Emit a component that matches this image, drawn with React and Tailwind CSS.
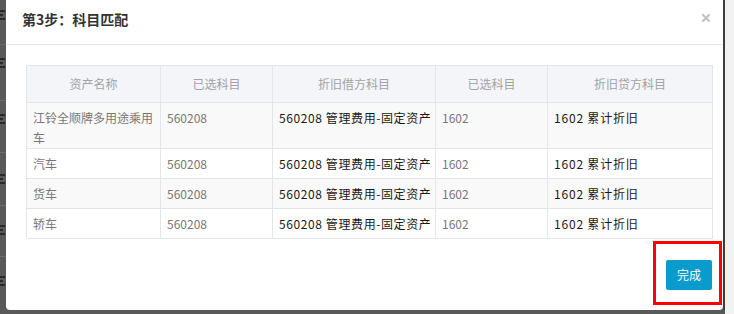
const rows = [
  { name: ['江铃全顺牌多用途乘用', '车'], tall: true },
  { name: ['汽车'] },
  { name: ['货车'] },
  { name: ['轿车'] },
]

const font = { fontFamily: '"Noto Sans CJK SC", "Liberation Sans", sans-serif' }

// page behind the dimmed overlay: only a 6px sliver shows on the left
function Backdrop() {
  return (
    <div className="relative w-[6px] shrink-0 overflow-hidden bg-[#595959]">
      {[10, 58, 114, 174, 225, 276].map((t) => (
        <div key={t} className="absolute left-0 flex w-[5px] flex-col gap-[2px]" style={{ top: t }}>
          <div className="h-[2px] w-[5px] bg-[#2a2a2a]" />
          <div className="h-[2px] w-[3px] bg-[#2a2a2a]" />
          <div className="h-[2px] w-[5px] bg-[#2a2a2a]" />
        </div>
      ))}
      {[44, 100, 152, 205, 256].map((t) => (
        <div key={t} className="absolute left-0 h-px w-[6px] bg-[#6a6a6a]" style={{ top: t }} />
      ))}
    </div>
  )
}

export default function App() {
  return (
    <div className="relative flex h-[314px] w-[734px] overflow-hidden bg-[#595959]" style={font}>
      <Backdrop />
      <div className="flex h-[310px] w-[717px] shrink-0 flex-col rounded-b-[4px] bg-white">
        <div className="flex h-[45px] items-start justify-between border-b border-[#e5e5e5] pl-[16px] pr-[13px] pt-[9px]">
          <h3 className="text-[14px] font-bold leading-[20px] text-[#333]">第3步：科目匹配</h3>
          <svg width="8" height="8" viewBox="0 0 8 8" className="mt-[5px]">
            <path d="M1 1L7 7M7 1L1 7" stroke="#c2c2c2" strokeWidth="2.2" strokeLinecap="square" />
          </svg>
        </div>
        <div className="px-[20px] pt-[20px]">
          <table className="w-[686px] table-fixed border-collapse text-[12px]">
            <colgroup>
              <col className="w-[134px]" />
              <col className="w-[112px]" />
              <col className="w-[163px]" />
              <col className="w-[112px]" />
              <col className="w-[165px]" />
            </colgroup>
            <thead>
              <tr className="bg-[#f3f5f9] text-[#a3a3a3]">
                {['资产名称', '已选科目', '折旧借方科目', '已选科目', '折旧贷方科目'].map((h, i) => (
                  <th key={i} className="border border-[#e1e6eb] py-[8px] text-center font-normal leading-[20px]">
                    {h}
                  </th>
                ))}
              </tr>
            </thead>
            <tbody>
              {rows.map((r, i) => {
                const pad = r.tall ? 'pt-[5px] pb-0' : 'pt-[5px] pb-[4px]'
                const cell = `border border-[#e1e6eb] px-[6px] align-top leading-[20px] ${pad}`
                return (
                  <tr key={i} className={i % 2 === 0 ? 'bg-[#f9f9f9]' : 'bg-white'}>
                    <td className={`${cell} text-[#777]`}>
                      {r.name.map((n, j) => (
                        <div key={j} className="leading-[20px]">{n}</div>
                      ))}
                    </td>
                    <td className={`${cell} text-[#777]`}>560208</td>
                    <td className={`${cell} whitespace-nowrap tracking-[0.6px] text-[#1a1a1a]`}>
                      560208 管理费用-固定资产
                    </td>
                    <td className={`${cell} text-[#777]`}>1602</td>
                    <td className={`${cell} tracking-[0.8px] text-[#1a1a1a]`}>1602 累计折旧</td>
                  </tr>
                )
              })}
            </tbody>
          </table>
        </div>
        <div className="flex justify-end pr-[11px] pt-[21px]">
          <button className="h-[30px] w-[46px] rounded-[2px] bg-[#0a9bcd] text-[12px] text-white">完成</button>
        </div>
      </div>
      <div className="h-[310px] w-[2px] shrink-0 bg-[#3e3e3e]" />
      <div className="h-[314px] flex-1 bg-[#f2f2f2]" />
      <div className="absolute left-[653px] top-[241px] h-[64px] w-[69px] border-[3px] border-[#ff0000]" />
    </div>
  )
}
